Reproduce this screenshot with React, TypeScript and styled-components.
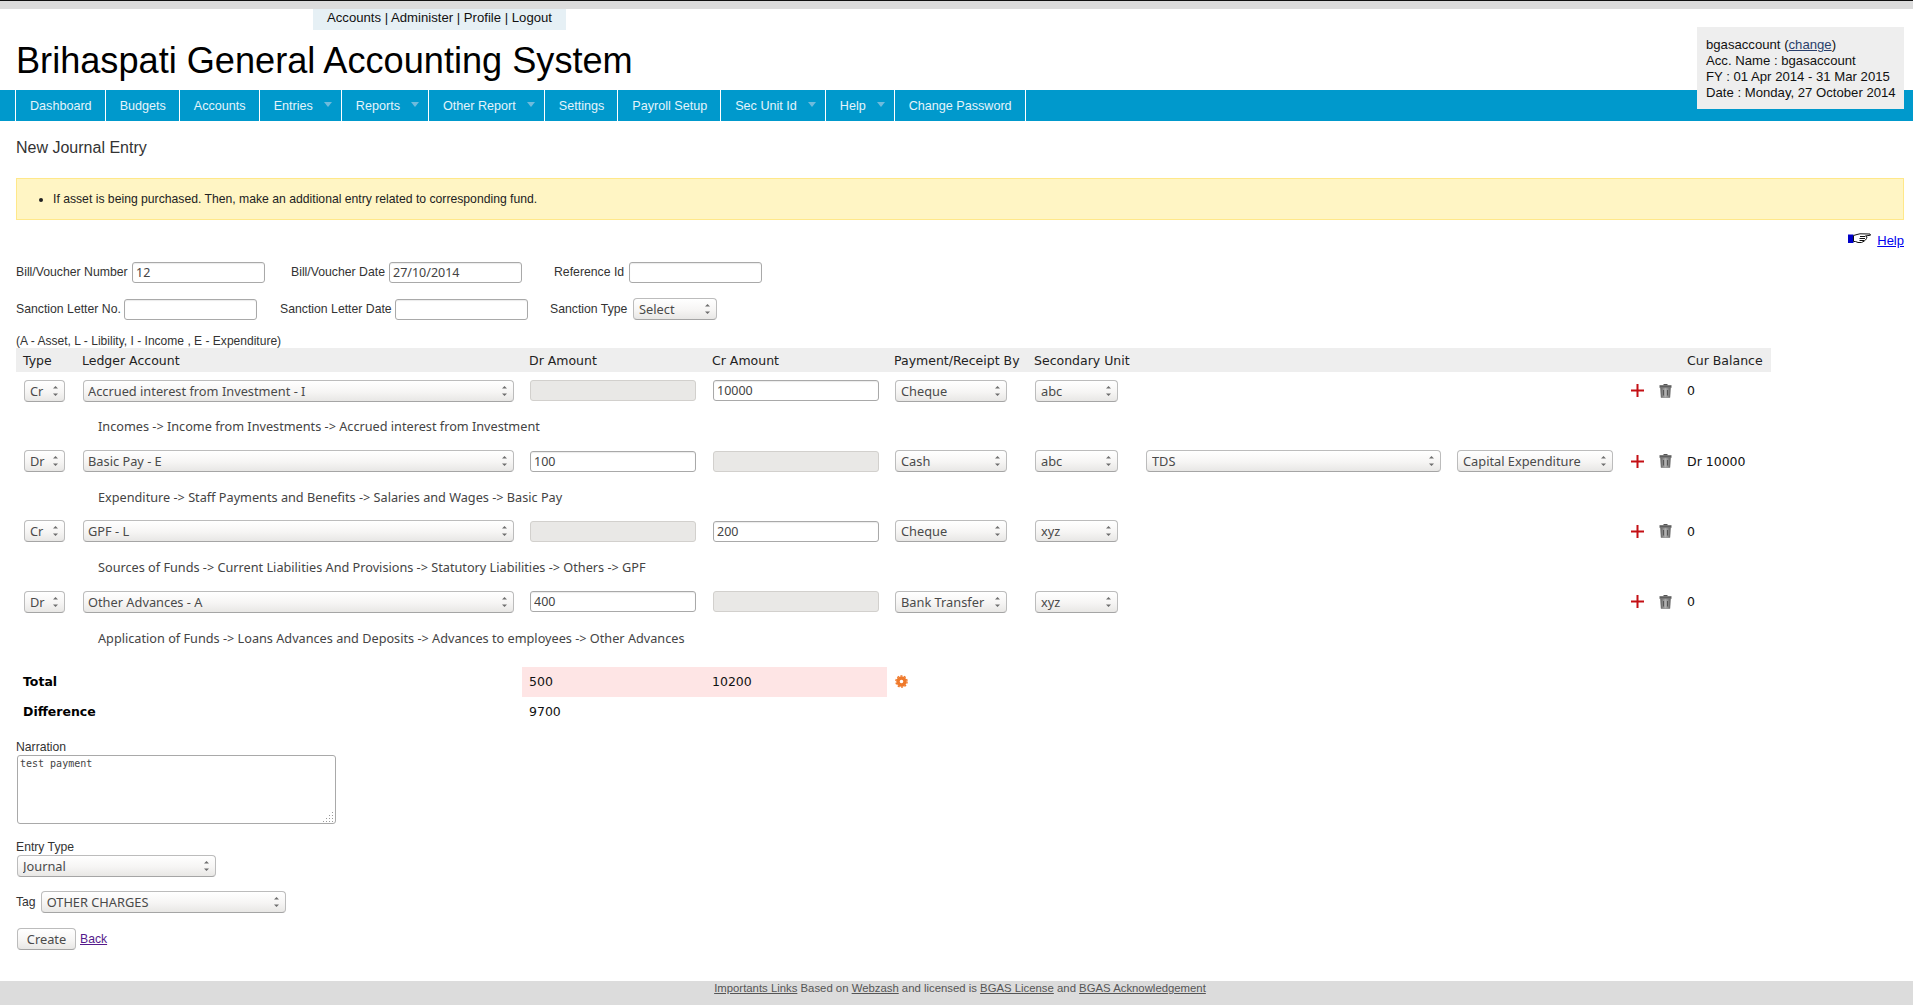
import React from "react";
import styled, { createGlobalStyle } from "styled-components";

const Global = createGlobalStyle`
  html, body { margin: 0; padding: 0; background: #fff; }
  body { font-family: "Liberation Sans", Arial, sans-serif; font-size: 12.2px; color: #333; }
`;

const UI_FONT = `"Noto Sans", "Open Sans", sans-serif`;
const TABLE_FONT = `"DejaVu Sans", Verdana, sans-serif`;
const COLS = "60px 446px 183px 182px 140px 112px 311px 174px 28px 28px 91px";

const Page = styled.div`
  display: flex;
  flex-direction: column;
  min-height: 1005px;
  height: 1005px;
  overflow: hidden;
`;
const Header = styled.header`
  position: relative;
`;
const TopStrip = styled.div`
  height: 8px;
  background: #dcdcdc;
  border-top: 1px solid #111;
`;
const TopLinks = styled.div`
  box-sizing: border-box;
  margin-left: 313px;
  width: 253px;
  height: 21px;
  background: #e6f0f5;
  color: #111;
  font-size: 13.15px;
  line-height: 17px;
  text-align: center;
`;
const Title = styled.h1`
  margin: 0;
  padding: 1px 0 0 16px;
  height: 59px;
  font-size: 36.15px;
  font-weight: 400;
  line-height: 60px;
  color: #000;
`;
const Nav = styled.nav`
  display: flex;
  height: 31px;
  padding-left: 16px;
  background: #0099cc;
`;
const NavItem = styled.a<{ $caret?: boolean }>`
  position: relative;
  display: block;
  box-sizing: border-box;
  padding: 1px ${(p) => (p.$caret ? "28px" : "13px")} 0 14px;
  border-right: 1px solid #fff;
  color: #e4f4fb;
  font-size: 12.6px;
  line-height: 30px;
  &:first-child { box-shadow: -1px 0 0 #fff; }
`;
const Caret = styled.i`
  position: absolute;
  right: 9px;
  top: 12px;
  width: 0;
  height: 0;
  border-left: 4px solid transparent;
  border-right: 4px solid transparent;
  border-top: 5px solid #6fbbdc;
`;
const InfoBox = styled.aside`
  position: absolute;
  top: 27px;
  right: 9px;
  width: 207px;
  height: 82px;
  box-sizing: border-box;
  padding: 10px 9px;
  background: #eee;
  color: #111;
  font-size: 13.15px;
  line-height: 16px;
  white-space: nowrap;
  a { color: #2a3f6b; text-decoration: underline; }
`;
const Main = styled.main`
  padding: 0 9px 0 16px;
`;
const Heading = styled.h2`
  box-sizing: border-box;
  margin: 0;
  padding-top: 17px;
  height: 57px;
  font-size: 16px;
  font-weight: 400;
  line-height: 19px;
  color: #333;
`;
const Notice = styled.ul`
  box-sizing: border-box;
  height: 42px;
  margin: 0;
  padding: 0 0 0 36px;
  background: #fff5c4;
  border: 1px solid #ffe88a;
  color: #222;
  font-size: 12.2px;
  line-height: 40px;
`;
const HelpRow = styled.div`
  display: flex;
  justify-content: flex-end;
  align-items: center;
  gap: 6px;
  height: 41.5px;
  padding-bottom: 3.5px;
  box-sizing: border-box;
  font-size: 13px;
  a { color: #0000ee; text-decoration: underline; margin-top: 3px; }
`;
const FieldRow = styled.div<{ $top: number }>`
  display: flex;
  align-items: center;
  height: 21px;
  margin-top: ${(p) => p.$top}px;
`;
const Label = styled.label<{ $w: number; $pad?: number }>`
  box-sizing: border-box;
  width: ${(p) => p.$w}px;
  padding-left: ${(p) => p.$pad ?? 0}px;
  flex: none;
  font-size: 12.25px;
  color: #333;
  white-space: nowrap;
`;
const TextInput = styled.input<{ $w?: number }>`
  box-sizing: border-box;
  width: ${(p) => p.$w ?? 133}px;
  height: 21px;
  flex: none;
  padding: 0 3px;
  border: 1px solid #a9a9a9;
  border-radius: 3px;
  background: #fff;
  box-shadow: inset 0 1px 1px rgba(0, 0, 0, 0.08);
  color: #444;
  font-family: ${UI_FONT};
  font-size: 12.5px;
  outline: none;
  &:disabled { background: #e9e8e6; border-color: #d2d0cd; box-shadow: none; }
`;
const Legend = styled.div`
  margin-top: 14.5px;
  height: 14px;
  font-size: 12.05px;
  line-height: 15px;
  color: #333;
`;
const Grid = styled.div`
  display: grid;
  grid-template-columns: ${COLS};
  width: 1755px;
`;
const HeadRow = styled(Grid)`
  height: 24px;
  background: #eee;
  align-items: center;
  color: #222;
  font-family: ${TABLE_FONT};
  font-size: 12.5px;
`;
const HeadCell = styled.div<{ $span?: number; $pad?: number }>`
  padding-left: ${(p) => p.$pad ?? 7}px;
  white-space: nowrap;
  grid-column: span ${(p) => p.$span ?? 1};
`;
const EntryRow = styled(Grid)`
  height: 37.4px;
  align-items: center;
  color: #111;
  font-family: ${TABLE_FONT};
  font-size: 12.5px;
`;
const Cell = styled.div`
  padding-left: 7px;
  min-width: 0;
  display: flex;
  align-items: center;
`;
const AmountCell = styled(Cell)`
  padding-left: 8px;
`;
const TypeCell = styled(Cell)`
  padding-left: 8px;
`;
const PathRow = styled.div`
  box-sizing: border-box;
  height: 33px;
  padding: 1px 0 0 82px;
  display: flex;
  align-items: center;
  color: #444;
  font-family: ${UI_FONT};
  font-size: 12.7px;
`;
const SelectWrap = styled.span<{ $w: number }>`
  position: relative;
  display: inline-block;
  flex: none;
  width: ${(p) => p.$w}px;
  height: 22px;
  svg {
    position: absolute;
    right: 6px;
    top: 5px;
    pointer-events: none;
  }
`;
const NativeSelect = styled.select<{ $pad?: number }>`
  display: block;
  box-sizing: border-box;
  width: 100%;
  height: 100%;
  padding: 0 14px 0 ${(p) => p.$pad ?? 5}px;
  appearance: none;
  border: 1px solid #bcbcbc;
  border-bottom-color: #a5a5a5;
  border-radius: 4px;
  background: linear-gradient(#ffffff, #f6f5f4 55%, #e8e7e5);
  color: #4a4a4a;
  font-family: ${UI_FONT};
  font-size: 12.8px;
  outline: none;
`;
const TotalRow = styled(Grid)<{ $top?: number }>`
  height: 30px;
  margin-top: ${(p) => p.$top ?? 0}px;
  align-items: center;
  color: #111;
  font-family: ${TABLE_FONT};
  font-size: 12.5px;
`;
const TotalLabel = styled.div`
  grid-column: span 2;
  padding-left: 7px;
  font-weight: 700;
  color: #000;
`;
const TotalValue = styled.div<{ $flagged?: boolean }>`
  align-self: stretch;
  display: flex;
  align-items: center;
  padding-left: 7px;
  background: ${(p) => (p.$flagged ? "#fee5e5" : "transparent")};
`;
const GearCell = styled.div`
  display: flex;
  align-items: center;
  padding-left: 8px;
`;
const NarrationWrap = styled.div`
  position: relative;
  width: 319px;
  height: 69px;
  margin-left: 1px;
  svg { position: absolute; right: 2px; bottom: 2px; }
`;
const Narration = styled.textarea`
  display: block;
  box-sizing: border-box;
  width: 100%;
  height: 100%;
  padding: 1px 2px;
  border: 1px solid #a9a9a9;
  border-radius: 3px;
  color: #444;
  font-family: "DejaVu Sans Mono", monospace;
  font-size: 10px;
  line-height: 13px;
  resize: none;
  outline: none;
`;
const StackLabel = styled.div<{ $top: number }>`
  margin-top: ${(p) => p.$top}px;
  height: 15px;
  font-size: 12.2px;
  line-height: 15px;
  color: #333;
`;
const Indent = styled.div`
  margin-left: 1px;
`;
const TagRow = styled.div`
  display: flex;
  align-items: center;
  gap: 5px;
  height: 22px;
  margin-top: 14px;
  font-size: 12.2px;
  color: #333;
`;
const ActionRow = styled.div`
  display: flex;
  align-items: center;
  gap: 4px;
  height: 22px;
  margin: 15px 0 0 1px;
  a { color: #551a8b; text-decoration: underline; font-size: 12.2px; }
`;
const Button = styled.button`
  box-sizing: border-box;
  width: 59px;
  height: 22px;
  padding: 0;
  border: 1px solid #bcbcbc;
  border-bottom-color: #a5a5a5;
  border-radius: 4px;
  background: linear-gradient(#ffffff, #f6f5f4 55%, #e8e7e5);
  color: #4a4a4a;
  font-family: ${UI_FONT};
  font-size: 12.8px;
`;
const Footer = styled.footer`
  margin-top: auto;
  height: 24px;
  padding-left: 7px;
  background: #dcdcdc;
  color: #555;
  font-size: 11.35px;
  line-height: 14px;
  text-align: center;
  a { color: #555; text-decoration: underline; }
`;

const Arrows = () => (
  <svg width="7" height="12" viewBox="0 0 7 12">
    <path d="M3.5 1 L6 3.6 H1 Z M3.5 11 L1 8.4 H6 Z" fill="#6e6e6e" />
  </svg>
);
const Select = ({ w, value, pad }: { w: number; value: string; pad?: number }) => (
  <SelectWrap $w={w}>
    <NativeSelect defaultValue={value} $pad={pad}>
      <option>{value}</option>
    </NativeSelect>
    <Arrows />
  </SelectWrap>
);
const Plus = () => (
  <svg width="13" height="13" viewBox="0 0 13 13">
    <path d="M0 5.5h13v2H0z M5.5 0h2v13h-2z" fill="#c40f14" />
  </svg>
);
const Trash = () => (
  <svg width="13" height="14" viewBox="0 0 13 14">
    <defs>
      <linearGradient id="tb" x1="0" x2="1" y1="0" y2="0">
        <stop offset="0" stopColor="#666" />
        <stop offset="0.5" stopColor="#b0b0b0" />
        <stop offset="1" stopColor="#666" />
      </linearGradient>
    </defs>
    <path d="M4.5 0h4v1.2h-4z" fill="#555" />
    <path d="M0.5 1.2h12v2.6h-12z" fill="#5e5e5e" />
    <path d="M1.5 3.8h10l-0.6 9.7h-8.8z" fill="url(#tb)" stroke="#666" strokeWidth="0.5" />
    <path d="M4 6h1v5.5H4z M8 6h1v5.5H8z" fill="#555" />
  </svg>
);
const Gear = () => (
  <svg width="13" height="13" viewBox="0 0 13 13">
    <circle cx="6.5" cy="6.5" r="3.5" fill="none" stroke="#ef7a2c" strokeWidth="3.4" />
    <circle cx="6.5" cy="6.5" r="5.6" fill="none" stroke="#ef7a2c" strokeWidth="1.4" strokeDasharray="2 1.52" />
  </svg>
);
const Hand = () => (
  <svg width="23" height="12" viewBox="0 0 23 12">
    <path d="M0 1.5h5.5v8.5H0z" fill="#0000c8" />
    <path
      d="M5.5 2.5 L9 1.5 L12 0.8 L22 1 L22.5 2.2 L17.5 3 L19 4 L18.5 5.5 L17.5 7 L16 8.2 L13.5 9.5 L10 9.5 L7.5 8.5 L5.5 8.5 Z"
      fill="#fff"
      stroke="#111"
      strokeWidth="1"
    />
    <path d="M12 3.5h5 M11.5 5.5h5.5 M11.5 7.5h4.5" stroke="#111" strokeWidth="1" fill="none" />
  </svg>
);
const ResizeDots = () => (
  <svg width="11" height="11" viewBox="0 0 11 11">
    <path d="M9 1h1v1H9z M6 4h1v1H6z M9 4h1v1H9z M3 7h1v1H3z M6 7h1v1H6z M9 7h1v1H9z M0 10h1v1H0z M3 10h1v1H3z M6 10h1v1H6z M9 10h1v1H9z" fill="#999" />
  </svg>
);

type Entry = {
  type: string;
  ledger: string;
  dr?: string;
  cr?: string;
  pay: string;
  sec: string;
  balance: string;
  path: string;
  extra?: boolean;
};
const entries: Entry[] = [
  { type: "Cr", ledger: "Accrued interest from Investment - I", cr: "10000", pay: "Cheque", sec: "abc", balance: "0", path: "Incomes -> Income from Investments -> Accrued interest from Investment" },
  { type: "Dr", ledger: "Basic Pay - E", dr: "100", pay: "Cash", sec: "abc", balance: "Dr 10000", extra: true, path: "Expenditure -> Staff Payments and Benefits -> Salaries and Wages -> Basic Pay" },
  { type: "Cr", ledger: "GPF - L", cr: "200", pay: "Cheque", sec: "xyz", balance: "0", path: "Sources of Funds -> Current Liabilities And Provisions -> Statutory Liabilities -> Others -> GPF" },
  { type: "Dr", ledger: "Other Advances - A", dr: "400", pay: "Bank Transfer", sec: "xyz", balance: "0", path: "Application of Funds -> Loans Advances and Deposits -> Advances to employees -> Other Advances" },
];
const navItems: [string, boolean][] = [
  ["Dashboard", false], ["Budgets", false], ["Accounts", false], ["Entries", true], ["Reports", true],
  ["Other Report", true], ["Settings", false], ["Payroll Setup", false], ["Sec Unit Id", true], ["Help", true], ["Change Password", false],
];

export default function App() {
  return (
    <Page>
      <Global />
      <Header>
        <TopStrip />
        <TopLinks>Accounts | Administer | Profile | Logout</TopLinks>
        <Title>Brihaspati General Accounting System</Title>
        <Nav>
          {navItems.map(([label, caret]) => (
            <NavItem key={label} $caret={caret}>
              {label}
              {caret && <Caret />}
            </NavItem>
          ))}
        </Nav>
        <InfoBox>
          bgasaccount (<a>change</a>)<br />
          Acc. Name : bgasaccount<br />
          FY : 01 Apr 2014 - 31 Mar 2015<br />
          Date : Monday, 27 October 2014
        </InfoBox>
      </Header>
      <Main>
        <Heading>New Journal Entry</Heading>
        <Notice>
          <li>If asset is being purchased. Then, make an additional entry related to corresponding fund.</li>
        </Notice>
        <HelpRow>
          <Hand />
          <a>Help</a>
        </HelpRow>
        <FieldRow $top={0}>
          <Label $w={116}>Bill/Voucher Number</Label>
          <TextInput defaultValue="12" />
          <Label $w={124} $pad={26}>Bill/Voucher Date</Label>
          <TextInput defaultValue="27/10/2014" />
          <Label $w={107} $pad={32}>Reference Id</Label>
          <TextInput />
        </FieldRow>
        <FieldRow $top={16}>
          <Label $w={108}>Sanction Letter No.</Label>
          <TextInput />
          <Label $w={138} $pad={23}>Sanction Letter Date</Label>
          <TextInput />
          <Label $w={105} $pad={22}>Sanction Type</Label>
          <Select w={84} value="Select" />
        </FieldRow>
        <Legend>(A - Asset, L - Libility, I - Income , E - Expenditure)</Legend>
        <HeadRow>
          <HeadCell>Type</HeadCell>
          <HeadCell $pad={6}>Ledger Account</HeadCell>
          <HeadCell>Dr Amount</HeadCell>
          <HeadCell>Cr Amount</HeadCell>
          <HeadCell>Payment/Receipt By</HeadCell>
          <HeadCell $span={5}>Secondary Unit</HeadCell>
          <HeadCell>Cur Balance</HeadCell>
        </HeadRow>
        {entries.map((e) => (
          <React.Fragment key={e.ledger}>
            <EntryRow>
              <TypeCell><Select w={41} value={e.type} /></TypeCell>
              <Cell><Select w={431} value={e.ledger} pad={4} /></Cell>
              <AmountCell><TextInput $w={166} defaultValue={e.dr} disabled={!e.dr} /></AmountCell>
              <AmountCell><TextInput $w={166} defaultValue={e.cr} disabled={!e.cr} /></AmountCell>
              <AmountCell><Select w={112} value={e.pay} /></AmountCell>
              <AmountCell><Select w={83} value={e.sec} /></AmountCell>
              <Cell>{e.extra && <Select w={295} value="TDS" />}</Cell>
              <Cell>{e.extra && <Select w={156} value="Capital Expenditure" />}</Cell>
              <Cell><Plus /></Cell>
              <Cell><Trash /></Cell>
              <Cell>{e.balance}</Cell>
            </EntryRow>
            <PathRow>{e.path}</PathRow>
          </React.Fragment>
        ))}
        <TotalRow $top={13.4}>
          <TotalLabel>Total</TotalLabel>
          <TotalValue $flagged>500</TotalValue>
          <TotalValue $flagged>10200</TotalValue>
          <GearCell><Gear /></GearCell>
        </TotalRow>
        <TotalRow>
          <TotalLabel>Difference</TotalLabel>
          <TotalValue>9700</TotalValue>
        </TotalRow>
        <StackLabel $top={13}>Narration</StackLabel>
        <NarrationWrap>
          <Narration defaultValue="test payment" />
          <ResizeDots />
        </NarrationWrap>
        <StackLabel $top={16}>Entry Type</StackLabel>
        <Indent><Select w={199} value="Journal" /></Indent>
        <TagRow>
          Tag
          <Select w={245} value="OTHER CHARGES" />
        </TagRow>
        <ActionRow>
          <Button>Create</Button>
          <a>Back</a>
        </ActionRow>
      </Main>
      <Footer>
        <a>Importants Links</a> Based on <a>Webzash</a> and licensed is <a>BGAS License</a> and <a>BGAS Acknowledgement</a>
      </Footer>
    </Page>
  );
}
